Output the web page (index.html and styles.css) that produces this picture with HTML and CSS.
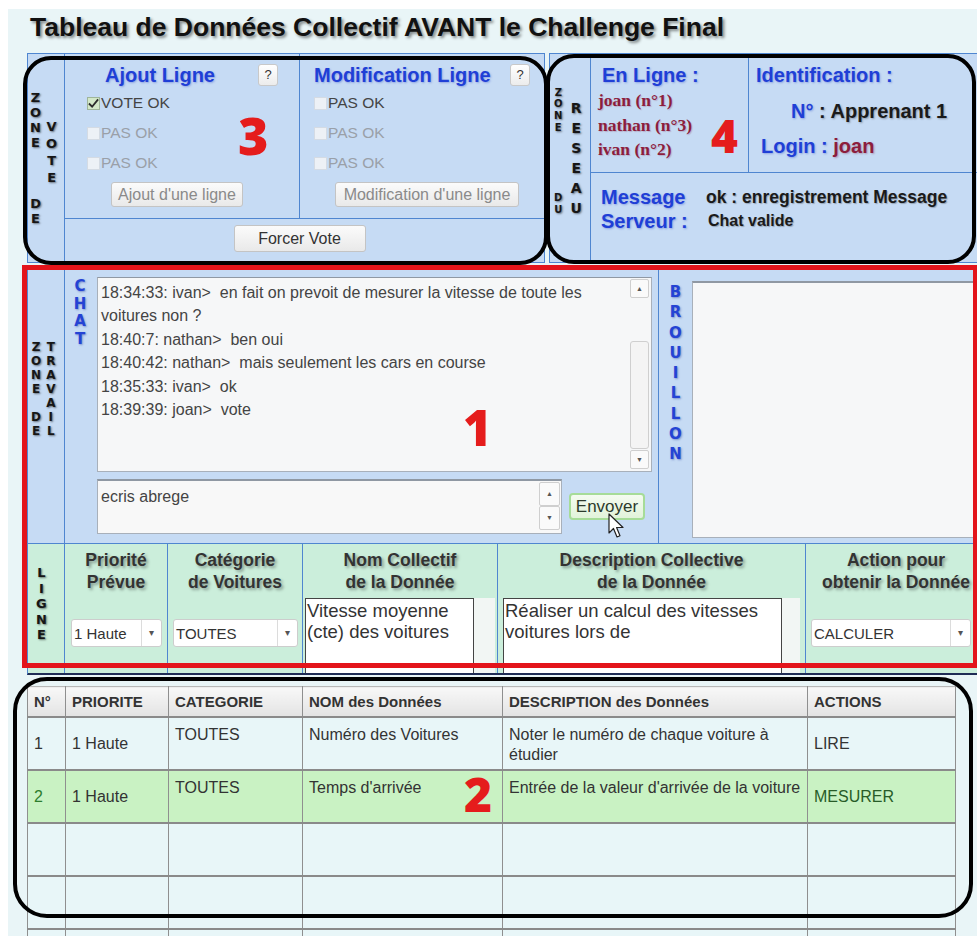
FILE: index.html
```html
<!DOCTYPE html>
<html lang="fr">
<head>
    <meta charset="UTF-8">
    <meta name="viewport" content="width=device-width, initial-scale=1.0">
    <title>Tableau de Données Collectif</title>
    <link rel="stylesheet" href="styles.css">
</head>
<body>

<div class="page">
    <h1 class="title">Tableau de Données Collectif AVANT le Challenge Final</h1>

    <div class="top">
        <!-- zone de vote -->
        <div class="panel vote">
            <div class="side side-vote">
                <div class="stack">Z<br>O<br>N<br>E<br><br><br><br>D<br>E</div>
                <div class="stack stack-vote">V<br>O<br>T<br>E</div>
            </div>
            <div class="vcol ajout">
                <div class="vhead">
                    <span class="blue-title">Ajout Ligne</span>
                    <span class="help">?</span>
                </div>
                <label class="check"><span class="cb checked"><svg width="12" height="11" viewBox="0 0 12 11"><path d="M1 5.5 L4.5 9 L11 1" fill="none" stroke="#2b2b2b" stroke-width="2"/></svg></span>VOTE OK</label>
                <label class="check off"><span class="cb"></span>PAS OK</label>
                <label class="check off"><span class="cb"></span>PAS OK</label>
                <div class="center"><span class="btn btn-off">Ajout d'une ligne</span></div>
            </div>
            <div class="vcol modif">
                <div class="vhead">
                    <span class="blue-title">Modification Ligne</span>
                    <span class="help">?</span>
                </div>
                <label class="check"><span class="cb"></span>PAS OK</label>
                <label class="check off"><span class="cb"></span>PAS OK</label>
                <label class="check off"><span class="cb"></span>PAS OK</label>
                <div class="center"><span class="btn btn-off">Modification d'une ligne</span></div>
            </div>
            <div class="force">
                <span class="btn">Forcer Vote</span>
            </div>
        </div>

        <!-- zone du reseau -->
        <div class="panel reseau">
            <div class="side side-reseau">
                <div class="stack stack-tight">Z<br>O<br>N<br>E<br><br><br><br><br><br>D<br>U</div>
                <div class="stack stack-big">R<br>E<br>S<br>E<br>A<br>U</div>
            </div>
            <div class="online">
                <div class="blue-title">En Ligne :</div>
                <div class="user">joan (n°1)</div>
                <div class="user">nathan (n°3)</div>
                <div class="user">ivan (n°2)</div>
            </div>
            <div class="ident">
                <div class="blue-title">Identification :</div>
                <div class="ident-num"><span class="blue-title">N°</span> : Apprenant 1</div>
                <div class="ident-login"><span class="blue-title">Login</span> <span class="blue-title">:</span> <span class="login-name">joan</span></div>
            </div>
            <div class="message">
                <span class="blue-title">Message</span>
                <span class="msg-val">ok : enregistrement Message</span>
                <span class="blue-title">Serveur :</span>
                <span class="msg-val small">Chat valide</span>
            </div>
        </div>
    </div>

    <!-- zone de travail -->
    <div class="panel main">
        <div class="work">
            <div class="side side-work">
                <div class="stack stack-work">Z<br>O<br>N<br>E<br><br>D<br>E</div>
                <div class="stack stack-work">T<br>R<br>A<br>V<br>A<br>I<br>L</div>
            </div>
            <div class="chat-col">
                <div class="stack blue-stack chat-letters">C<br>H<br>A<br>T</div>
                <div class="chat-body">
                    <div class="chat-box">
                        <div class="chat-lines">
                            <div>18:34:33: ivan&gt;&nbsp; en fait on prevoit de mesurer la vitesse de toute les</div>
                            <div>voitures non ?</div>
                            <div>18:40:7: nathan&gt;&nbsp; ben oui</div>
                            <div>18:40:42: nathan&gt;&nbsp; mais seulement les cars en course</div>
                            <div>18:35:33: ivan&gt;&nbsp; ok</div>
                            <div>18:39:39: joan&gt;&nbsp; vote</div>
                        </div>
                        <div class="scrollbar">
                            <span class="sb-btn">&#9650;</span>
                            <span class="sb-track"><span class="sb-thumb"></span></span>
                            <span class="sb-btn">&#9660;</span>
                        </div>
                    </div>
                    <div class="send-row">
                        <div class="input-box">
                            <span class="input-text">ecris abrege</span>
                            <div class="spin">
                                <span class="sb-btn">&#9650;</span>
                                <span class="sb-btn">&#9660;</span>
                            </div>
                        </div>
                        <span class="btn btn-send">Envoyer</span>
                    </div>
                </div>
            </div>
            <div class="draft-col">
                <div class="stack blue-stack draft-letters">B<br>R<br>O<br>U<br>I<br>L<br>L<br>O<br>N</div>
                <div class="draft-box"></div>
            </div>
        </div>

        <div class="ligne">
            <div class="side side-ligne">
                <div class="stack stack-ligne">L<br>I<br>G<br>N<br>E</div>
            </div>
            <div class="lcell">
                <div class="lhead">Priorité<br>Prévue</div>
                <div class="select w-prio"><span>1 Haute</span><i>&#9662;</i></div>
            </div>
            <div class="lcell">
                <div class="lhead">Catégorie<br>de Voitures</div>
                <div class="select w-cat"><span>TOUTES</span><i>&#9662;</i></div>
            </div>
            <div class="lcell">
                <div class="lhead">Nom Collectif<br>de la Donnée</div>
                <div class="ta-wrap"><div class="ta ta-nom">Vitesse moyenne (cte) des voitures</div></div>
            </div>
            <div class="lcell">
                <div class="lhead">Description Collective<br>de la Donnée</div>
                <div class="ta-wrap"><div class="ta ta-desc">Réaliser un calcul des vitesses voitures lors de</div></div>
            </div>
            <div class="lcell">
                <div class="lhead">Action pour<br>obtenir la Donnée</div>
                <div class="select w-act"><span>CALCULER</span><i>&#9662;</i></div>
            </div>
        </div>
    </div>

    <!-- tableau des donnees -->
    <table class="data">
        <colgroup>
            <col style="width:38px">
            <col style="width:103px">
            <col style="width:134px">
            <col style="width:200px">
            <col style="width:305px">
            <col style="width:148px">
        </colgroup>
        <thead>
            <tr>
                <th>N°</th>
                <th>PRIORITE</th>
                <th>CATEGORIE</th>
                <th>NOM des Données</th>
                <th>DESCRIPTION des Données</th>
                <th>ACTIONS</th>
            </tr>
        </thead>
        <tbody>
            <tr>
                <td class="mid">1</td>
                <td class="mid">1 Haute</td>
                <td>TOUTES</td>
                <td>Numéro des Voitures</td>
                <td>Noter le numéro de chaque voiture à étudier</td>
                <td class="mid">LIRE</td>
            </tr>
            <tr class="selected">
                <td class="mid num">2</td>
                <td class="mid">1 Haute</td>
                <td>TOUTES</td>
                <td>Temps d'arrivée</td>
                <td>Entrée de la valeur d'arrivée de la voiture</td>
                <td class="mid act">MESURER</td>
            </tr>
            <tr><td></td><td></td><td></td><td></td><td></td><td></td></tr>
            <tr><td></td><td></td><td></td><td></td><td></td><td></td></tr>
            <tr><td></td><td></td><td></td><td></td><td></td><td></td></tr>
        </tbody>
    </table>

    <!-- annotations -->
    <div class="mark mark-vote"></div>
    <div class="mark mark-reseau"></div>
    <div class="mark-red"></div>
    <div class="mark mark-table"></div>
    <span class="num-red n3">3</span>
    <span class="num-red n4">4</span>
    <span class="num-red n1">1</span>
    <span class="num-red n2">2</span>
    <svg class="cursor" width="17" height="27" viewBox="0 0 17 27">
        <path d="M1 1 L1 20 L5.5 15.5 L9 24 L12 22.7 L8.6 14.5 L15 14.5 Z" fill="#fff" stroke="#222" stroke-width="1.2" stroke-linejoin="round"/>
    </svg>
</div>

</body>
</html>
```

FILE: styles.css
```css
html, body {
    margin: 0;
    overflow: hidden;
}
body {
    background: #fff;
    font-family: "Liberation Sans", Arial, sans-serif;
    color: #333;
}
.page {
    position: relative;
    margin: 9px 0 0 8px;
    width: 990px;
    height: 940px;
    padding-left: 19px;
    box-sizing: border-box;
    background: #e9f5f7;
}
.title {
    margin: 0;
    padding: 3px 0 0 3px;
    height: 44px;
    box-sizing: border-box;
    font-size: 26.5px;
    line-height: 30px;
    font-weight: bold;
    color: #111;
    text-shadow: 2px 2px 3px rgba(0,0,0,0.45);
}

/* panels */
.panel {
    background: #c6dbf4;
    border: 1px solid #4f86d0;
    box-sizing: border-box;
}
.top {
    display: flex;
    gap: 4px;
    height: 210px;
}
.side {
    display: flex;
    align-items: center;
    gap: 5px;
    border-right: 1px solid #4f86d0;
}
.stack {
    text-align: center;
    font-family: "DejaVu Sans", Verdana, sans-serif;
    font-weight: bold;
    font-size: 13px;
    line-height: 15.2px;
    color: #161616;
    text-shadow: 1px 1px 2px rgba(0,0,0,0.5);
}
.side-vote {
    padding-left: 2px;
}
.stack-vote {
    line-height: 17px;
    padding-bottom: 12px;
}
.side-reseau {
    padding-left: 4px;
    gap: 8px;
}
.stack-tight {
    font-size: 10px;
    line-height: 11.7px;
    padding-bottom: 14px;
}
.stack-big {
    font-size: 14px;
    line-height: 20px;
}
.blue-stack {
    color: #2443d4;
    text-shadow: 1px 1px 2px rgba(40,60,160,0.45);
}
.blue-title {
    font-weight: bold;
    font-size: 20px;
    color: #1f3fd6;
    text-shadow: 1px 1px 2px rgba(60,80,200,0.4);
}

/* vote */
.vote {
    width: 518px;
    display: grid;
    grid-template-columns: 37px 235px 1fr;
    grid-template-rows: 165px 1fr;
}
.vote .side {
    grid-row: 1 / 3;
}
.vcol {
    padding-top: 8px;
    border-bottom: 1px solid #4f86d0;
}
.ajout {
    border-right: 1px solid #4f86d0;
    padding-left: 22px;
}
.modif {
    padding-left: 14px;
}
.vhead {
    display: flex;
    align-items: center;
    justify-content: space-between;
    height: 26px;
}
.ajout .vhead {
    padding: 0 21px 0 18px;
}
.modif .vhead {
    padding-right: 14px;
}
.help {
    width: 20px;
    height: 22px;
    box-sizing: border-box;
    border: 1px solid #c9c9c9;
    border-radius: 3px;
    background: linear-gradient(#ffffff, #ececec);
    font-size: 13px;
    line-height: 20px;
    text-align: center;
    color: #333;
}
.check {
    display: flex;
    align-items: center;
    height: 30px;
    font-size: 15.5px;
    color: #444;
}
.check.off {
    color: #9aa0a8;
}
.cb {
    width: 13px;
    height: 13px;
    margin-right: 1px;
    box-sizing: border-box;
    border: 1px solid #d4dbe4;
    background: #edf1f6;
    display: flex;
    align-items: center;
    justify-content: center;
}
.cb.checked {
    background: #d3e8c8;
    border-color: #9fb59a;
}
.center {
    display: flex;
    justify-content: center;
    margin-top: 4px;
}
.ajout .center {
    padding-right: 32px;
}
.modif .center {
    padding-right: 4px;
}
.btn {
    display: inline-block;
    height: 25px;
    box-sizing: border-box;
    padding: 0 6px;
    border: 1px solid #c4c4c4;
    border-radius: 3px;
    background: linear-gradient(#fbfbfb, #e9e9e9);
    font-size: 16px;
    line-height: 23px;
    color: #333;
}
.btn-off {
    color: #8a8a8a;
}
.modif .btn {
    padding: 0 8px;
}
.force {
    grid-column: 2 / 4;
    display: flex;
    justify-content: center;
    padding-top: 6px;
    padding-right: 10px;
}
.force .btn {
    width: 132px;
    height: 27px;
    line-height: 25px;
    text-align: center;
}

/* reseau */
.reseau {
    flex: 1;
    display: grid;
    grid-template-columns: 41px 158px 1fr;
    grid-template-rows: 119px 1fr;
}
.reseau .side {
    grid-row: 1 / 3;
}
.online {
    padding: 8px 0 0 7px;
    border-right: 1px solid #4f86d0;
    border-bottom: 1px solid #4f86d0;
}
.online .blue-title {
    line-height: 26px;
    padding-left: 4px;
}
.user {
    font-family: "Liberation Serif", "Times New Roman", serif;
    font-weight: bold;
    font-size: 17.5px;
    line-height: 24.5px;
    color: #8c1d3d;
    text-shadow: 1px 1px 1px rgba(120,0,40,0.2);
}
.ident {
    padding: 8px 0 0 7px;
    border-bottom: 1px solid #4f86d0;
}
.ident > .blue-title {
    line-height: 26px;
}
.ident-num {
    padding: 12px 0 0 35px;
    font-size: 20px;
    font-weight: bold;
    color: #1a1a1a;
    text-shadow: 1px 1px 2px rgba(0,0,0,0.3);
}
.ident-login {
    padding: 12px 0 0 5px;
    font-size: 20px;
}
.login-name {
    font-weight: bold;
    color: #8c1d3d;
    text-shadow: 1px 1px 2px rgba(120,0,40,0.3);
}
.message {
    grid-column: 2 / 4;
    display: grid;
    grid-template-columns: 105px 1fr;
    align-content: start;
    align-items: center;
    padding: 12px 0 0 10px;
    line-height: 24px;
}
.msg-val {
    font-weight: bold;
    font-size: 17.5px;
    color: #1a1a1a;
    text-shadow: 1px 1px 1px rgba(0,0,0,0.25);
}
.msg-val.small {
    font-size: 16px;
    padding-left: 2px;
}

/* travail */
.main {
    margin-top: 5px;
    width: 960px;
    border-bottom: 2px solid #1f2c55;
}
.work {
    display: flex;
    height: 274px;
}
.side-work {
    width: 37px;
    flex: none;
    gap: 5px;
    align-items: flex-start;
    padding: 71px 0 0 3px;
    box-sizing: border-box;
}
.stack-work {
    font-size: 12px;
    line-height: 14px;
}
.chat-col {
    width: 593px;
    flex: none;
    display: flex;
    border-right: 1px solid #4f86d0;
}
.chat-letters {
    width: 30px;
    font-size: 15px;
    line-height: 17.5px;
    padding-top: 9px;
}
.chat-body {
    flex: 1;
    padding: 8px 6px 0 2px;
}
.chat-box {
    display: flex;
    height: 195px;
    box-sizing: border-box;
    border: 1px solid #a8b0ba;
    border-top-color: #8f98a3;
    background: #f6f7f8;
}
.chat-lines {
    flex: 1;
    padding: 3px 0 0 3px;
    font-size: 16px;
    line-height: 23.4px;
    color: #444;
}
.scrollbar {
    width: 19px;
    display: flex;
    flex-direction: column;
    padding: 1px 2px 2px 0;
}
.sb-btn {
    height: 19px;
    box-sizing: border-box;
    border: 1px solid #cfcfcf;
    border-radius: 2px;
    background: #fafafa;
    font-size: 7px;
    line-height: 17px;
    text-align: center;
    color: #555;
}
.sb-track {
    flex: 1;
    padding: 43px 0 1px;
}
.sb-thumb {
    display: block;
    height: 100%;
    box-sizing: border-box;
    border: 1px solid #cfcfcf;
    border-radius: 3px;
    background: #f4f4f4;
}
.send-row {
    display: flex;
    align-items: center;
    gap: 7px;
    margin-top: 7px;
}
.input-box {
    display: flex;
    width: 465px;
    height: 55px;
    box-sizing: border-box;
    border: 1px solid #a8b0ba;
    border-top: 2px solid #8f98a3;
    background: #f8f8f8;
}
.input-text {
    flex: 1;
    padding: 7px 0 0 3px;
    font-size: 16px;
    color: #444;
}
.spin {
    width: 21px;
    display: flex;
    flex-direction: column;
    padding: 1px 1px 0 0;
}
.spin .sb-btn {
    height: 24px;
    line-height: 22px;
}
.btn-send {
    width: 76px;
    height: 27px;
    padding: 0;
    text-align: center;
    border: 2px solid #a6dc98;
    border-radius: 4px;
    background: linear-gradient(#f4fbf0, #e2f3da);
    font-size: 17px;
    color: #2c3a2c;
    line-height: 23px;
}
.draft-col {
    flex: 1;
    display: flex;
}
.draft-letters {
    width: 33px;
    font-size: 15px;
    line-height: 20.3px;
    padding-top: 13px;
}
.draft-box {
    flex: 1;
    margin: 12px 0 5px 0;
    border: 1px solid #a8b0ba;
    border-top: 2px solid #8f98a3;
    background: #f6f7f8;
}

/* ligne */
.ligne {
    display: grid;
    grid-template-columns: 37px 103px 135px 195px 308px 1fr;
    height: 129px;
    overflow: hidden;
    background: #cbeedb;
    border-top: 1px solid #4f86d0;
}
.side-ligne {
    align-items: flex-start;
    padding: 21px 0 0 8px;
}
.stack-ligne {
    line-height: 15.5px;
}
.lcell {
    border-right: 1px solid #4f86d0;
    padding-top: 5px;
}
.lcell:last-child {
    border-right: none;
}
.lhead {
    text-align: center;
    font-weight: bold;
    font-size: 17.5px;
    line-height: 22px;
    color: #333;
    text-shadow: 2px 2px 3px rgba(0,0,0,0.35);
}
.select {
    display: flex;
    align-items: center;
    height: 28px;
    margin-top: 26px;
    box-sizing: border-box;
    border: 1px solid #cdcdcd;
    border-radius: 3px;
    background: #fff;
    font-size: 15px;
    color: #333;
}
.select span {
    flex: 1;
    padding-left: 2px;
}
.select i {
    width: 19px;
    height: 100%;
    border-left: 1px solid #dcdcdc;
    font-style: normal;
    font-size: 10px;
    line-height: 26px;
    text-align: center;
    color: #555;
}
.w-prio {
    width: 91px;
    margin-left: 6px;
}
.w-cat {
    width: 125px;
    margin-left: 5px;
}
.w-act {
    width: 160px;
    margin-left: 5px;
}
.ta-wrap {
    margin: 5px 0 0 2px;
    background: #f2f6f4;
    width: 190px;
}
.lcell:nth-child(5) .ta-wrap {
    margin-left: 5px;
    width: 297px;
}
.ta {
    height: 78px;
    box-sizing: border-box;
    border: 1px solid #444;
    background: #fff;
    padding: 2px 2px 0 1px;
    font-size: 18.5px;
    line-height: 20.5px;
    color: #333;
}
.ta-nom {
    width: 169px;
}
.ta-desc {
    width: 279px;
}

/* tableau */
.data {
    margin-top: 11px;
    width: 928px;
    table-layout: fixed;
    border-collapse: collapse;
    background: #e8f6f8;
    font-size: 16px;
    color: #333;
}
.data th {
    height: 29px;
    padding: 0 6px;
    text-align: left;
    font-size: 15px;
    color: #333;
    background: linear-gradient(#f8f8f8, #e3e3e3);
    border: 1px solid #8f8f8f;
    border-top: 1px solid #b8b8b8;
}
.data td {
    height: 44px;
    padding: 7px 4px 0 6px;
    vertical-align: top;
    line-height: 20px;
    border: 1px solid #8f8f8f;
    border-top: 2px solid #8a8a8a;
}
.data td.mid {
    vertical-align: middle;
    padding-top: 4px;
    padding-bottom: 3px;
}
.data tr.selected td {
    background: #c9f2c3;
}
.data td.num {
    color: #2d7d2d;
}
.data td.act {
    color: #285c28;
}

/* annotations */
.mark {
    position: absolute;
    border: 4px solid #000;
    border-radius: 28px;
    box-sizing: border-box;
}
.mark-vote {
    left: 15px;
    top: 47px;
    width: 525px;
    height: 209px;
}
.mark-reseau {
    left: 538px;
    top: 45px;
    width: 430px;
    height: 210px;
}
.mark-table {
    left: 5px;
    top: 668px;
    width: 960px;
    height: 241px;
    border-radius: 34px;
}
.mark-red {
    position: absolute;
    left: 14px;
    top: 256px;
    width: 956px;
    height: 403px;
    box-sizing: border-box;
    border: 5px solid #e3141b;
}
.num-red {
    position: absolute;
    font-family: "Open Sans", "Liberation Sans", sans-serif;
    font-weight: 800;
    line-height: 1;
    color: #e51c1c;
}
.n3 {
    left: 230px;
    top: 100px;
    font-size: 52px;
}
.n4 {
    left: 703px;
    top: 103px;
    font-size: 46px;
}
.n1 {
    left: 455px;
    top: 394px;
    font-size: 49px;
}
.n2 {
    left: 456px;
    top: 761px;
    font-size: 48px;
}
.cursor {
    position: absolute;
    left: 600px;
    top: 504px;
}
```
